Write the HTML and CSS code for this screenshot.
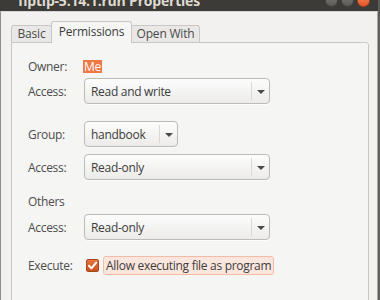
FILE: index.html
```html
<!DOCTYPE html>
<html lang="en">
<head>
    <meta charset="UTF-8">
    <meta name="viewport" content="width=device-width, initial-scale=1.0">
    <title>Properties</title>
    <link rel="stylesheet" href="styles.css">
</head>
<body>
    <div class="window">
        <div class="titlebar">
            <span class="title">fiptip-5.14.1.run Properties</span>
            <div class="controls">
                <span class="ctl"></span>
                <span class="ctl"></span>
                <span class="ctl close"></span>
            </div>
        </div>
        <div class="body">
            <div class="tabs">
                <div class="tab tab-basic">Basic</div>
                <div class="tab tab-perm active">Permissions</div>
                <div class="tab tab-open">Open With</div>
            </div>
            <div class="panel">
                <div class="row row-owner">
                    <span class="label">Owner:</span>
                    <span class="me">Me</span>
                </div>
                <div class="row row-access1">
                    <span class="label">Access:</span>
                    <div class="combo wide">
                        <span class="combo-text">Read and write</span>
                        <span class="combo-btn"><span class="arrow"></span></span>
                    </div>
                </div>
                <div class="row row-group">
                    <span class="label">Group:</span>
                    <div class="combo narrow">
                        <span class="combo-text">handbook</span>
                        <span class="combo-btn"><span class="arrow"></span></span>
                    </div>
                </div>
                <div class="row row-access2">
                    <span class="label">Access:</span>
                    <div class="combo wide">
                        <span class="combo-text">Read-only</span>
                        <span class="combo-btn"><span class="arrow"></span></span>
                    </div>
                </div>
                <div class="row row-others">
                    <span class="label">Others</span>
                </div>
                <div class="row row-access3">
                    <span class="label">Access:</span>
                    <div class="combo wide">
                        <span class="combo-text">Read-only</span>
                        <span class="combo-btn"><span class="arrow"></span></span>
                    </div>
                </div>
                <div class="row row-exec">
                    <span class="label">Execute:</span>
                    <span class="checkbox">
                        <svg width="13" height="13" viewBox="0 0 13 13">
                            <path d="M3 6.8 L5.4 9.3 L10.2 3.6" fill="none" stroke="#ffffff" stroke-width="2" stroke-linecap="round" stroke-linejoin="round"/>
                        </svg>
                    </span>
                    <span class="check-label">Allow executing file as program</span>
                </div>
            </div>
        </div>
    </div>
</body>
</html>
```

FILE: styles.css
```css
* {
    box-sizing: border-box;
    margin: 0;
    padding: 0;
}
html, body {
    width: 380px;
    height: 300px;
    overflow: hidden;
    background-color: #3c3b37;
}
body {
    font-family: "Open Sans", "Noto Sans", sans-serif;
    font-size: 12px;
    color: #3c3c3c;
}
.window {
    width: 380px;
    height: 300px;
    display: flex;
    flex-direction: column;
    border-right: 2px solid #5f5e5a;
}
.titlebar {
    height: 11px;
    flex-shrink: 0;
    display: flex;
    align-items: flex-end;
    justify-content: space-between;
    overflow: hidden;
    background-color: #3c3b37;
    padding-left: 18px;
}
.title {
    font-size: 14px;
    font-weight: bold;
    line-height: 17px;
    color: #dfdbd2;
    margin-bottom: 2px;
    letter-spacing: -0.2px;
}
.controls {
    display: flex;
    gap: 3px;
    margin-bottom: 4px;
    margin-right: 8px;
}
.ctl {
    width: 13px;
    height: 13px;
    border-radius: 50%;
    background: linear-gradient(#7d7c78, #5a5955);
    border: 1px solid #45443f;
}
.ctl.close {
    background: linear-gradient(#f58a5c, #e2542a);
    border-color: #b2421d;
}
.body {
    flex: 1;
    background-color: #f2f1f0;
    border-left: 1px solid #8e8c88;
    border-right: 1px solid #aaa8a4;
    border-top: 1px solid #d8d6d2;
    padding: 9px 0 0 10px;
    overflow: hidden;
}
.tabs {
    display: flex;
    align-items: flex-end;
    height: 21px;
}
.tab {
    height: 17px;
    border: 1px solid #c9c7c3;
    border-bottom: none;
    border-radius: 3px 3px 0 0;
    background-color: #e9e8e6;
    text-align: center;
    line-height: 15px;
    letter-spacing: -0.2px;
    color: #4a4a4a;
}
.tab-basic {
    width: 41px;
}
.tab-perm {
    width: 81px;
    margin-left: -1px;
}
.tab-open {
    width: 69px;
    margin-left: -1px;
}
.tab.active {
    height: 22px;
    margin-bottom: -1px;
    line-height: 19px;
    background-color: #f5f5f4;
    position: relative;
    z-index: 1;
    color: #3c3c3c;
}
.panel {
    width: 358px;
    height: 300px;
    border: 1px solid #c9c7c3;
    border-radius: 0 3px 0 0;
    background-color: #f5f5f4;
    padding-left: 16px;
    display: flex;
    flex-direction: column;
}
.row {
    display: flex;
    align-items: center;
    height: 26px;
    letter-spacing: -0.3px;
}
.label {
    width: 56px;
    flex-shrink: 0;
    color: #4c4c4c;
}
.row-owner {
    height: 20px;
    margin-top: 13px;
}
.row-access1 {
    margin-top: 2px;
}
.row-group {
    margin-top: 17px;
}
.row-access2 {
    margin-top: 7px;
}
.row-others {
    height: 20px;
    margin-top: 11px;
}
.row-access3 {
    margin-top: 3px;
}
.row-exec {
    height: 20px;
    margin-top: 15px;
}
.me {
    background-color: #f07746;
    color: #ffffff;
    padding: 0 1px;
    line-height: 13px;
    margin-left: -1px;
}
.combo {
    height: 26px;
    display: flex;
    align-items: center;
    border: 1px solid #bdbbb6;
    border-radius: 4px;
    background: linear-gradient(#fdfdfd, #ecebe9);
    box-shadow: 0 1px 0 rgba(255, 255, 255, 0.8);
}
.combo.wide {
    width: 186px;
}
.combo.narrow {
    width: 94px;
}
.combo-text {
    flex: 1;
    padding-left: 6px;
    color: #3c3c3c;
}
.combo-btn {
    width: 18px;
    height: 18px;
    border-left: 1px solid #d9d8d5;
    display: flex;
    align-items: center;
    justify-content: center;
}
.arrow {
    width: 0;
    height: 0;
    border-left: 4px solid transparent;
    border-right: 4px solid transparent;
    border-top: 4px solid #4a4a4a;
    margin-top: 1px;
}
.checkbox {
    width: 13px;
    height: 13px;
    margin-left: 2px;
    border-radius: 2px;
    border: 1px solid #a9471c;
    background: linear-gradient(#e7733f, #c8531f);
    display: flex;
    align-items: center;
    justify-content: center;
}
.checkbox svg {
    margin: -1px;
}
.check-label {
    margin-left: 4px;
    height: 19px;
    line-height: 17px;
    padding: 0 2px 0 2px;
    border: 1px solid #f4bca6;
    border-radius: 3px;
    background-color: #fbe6de;
    color: #3c3c3c;
}
```
